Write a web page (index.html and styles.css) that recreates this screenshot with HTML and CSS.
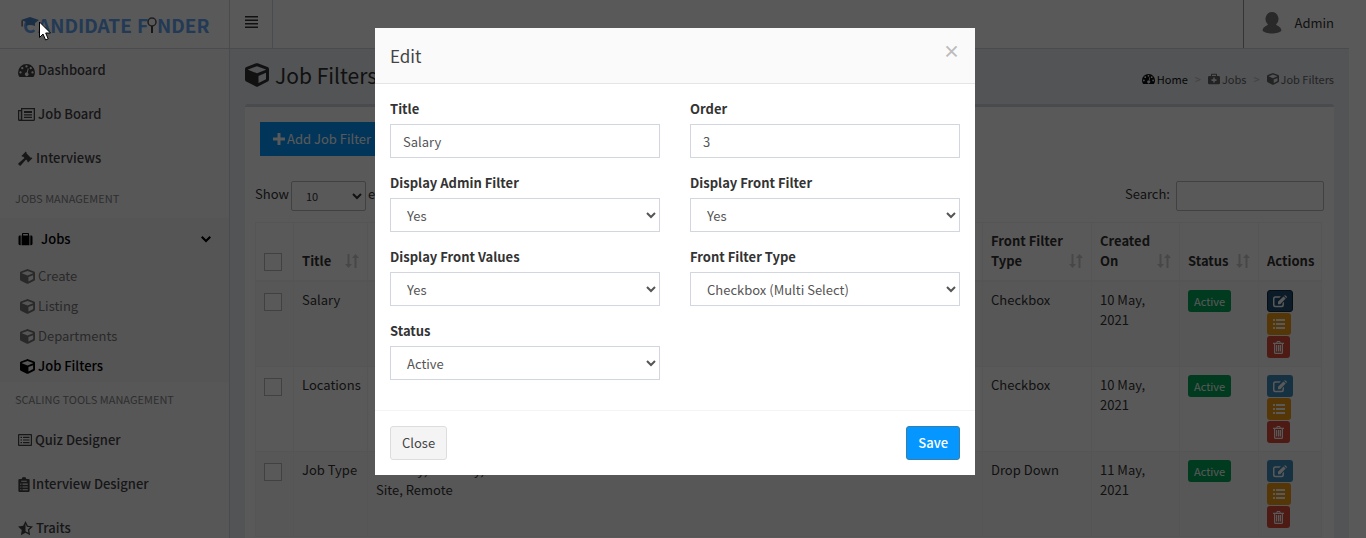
FILE: index.html
```html
<!DOCTYPE html>
<html lang="en">
<head>
<meta charset="utf-8">
<meta name="viewport" content="width=device-width, initial-scale=1">
<title>Job Filters</title>
<link rel="stylesheet" href="styles.css">
</head>
<body>
<svg class="sprite" aria-hidden="true">
  <symbol id="cube" viewBox="0 0 512 512"><path d="M239.1 6.3l-208 78c-18.7 7-31.1 25-31.1 45v225.1c0 18.2 10.3 34.8 26.5 42.9l208 104c13.5 6.8 29.4 6.8 42.9 0l208-104c16.3-8.1 26.5-24.8 26.5-42.9V129.3c0-20-12.4-37.9-31.1-44.9l-208-78C262 2.2 250 2.2 239.1 6.3zM256 68.4l192 72v1.1l-192 78-192-78v-1.1l192-72zm32 356V275.5l160-65v133.9l-160 80z"/></symbol>
  <symbol id="dash" viewBox="0 0 18 16"><path fill-rule="evenodd" d="M9 1a9 9 0 0 0-9 9c0 1.800.5 3.400 1.400 4.700.2.200.3.300.6.300h14c.3 0 .4-.1.6-.3A9 9 0 0 0 9 1zM2.600 8.800a1.200 1.200 0 1 1 0 2.400 1.200 1.200 0 0 1 0-2.400zM4.500 4.300a1.200 1.200 0 1 1 0 2.400 1.200 1.200 0 0 1 0-2.400zM9 2.400a1.200 1.200 0 1 1 0 2.400 1.200 1.200 0 0 1 0-2.400zM13.500 4.300a1.200 1.200 0 1 1 0 2.400 1.200 1.200 0 0 1 0-2.400zM15.400 8.800a1.200 1.200 0 1 1 0 2.400 1.200 1.200 0 0 1 0-2.400zM10.300 5.700l1 .3-1 4.300a2 2 0 1 1-1-.3z"/></symbol>
  <symbol id="news" viewBox="0 0 17 13"><path fill-rule="evenodd" d="M3 0h14v11.500a1.500 1.500 0 0 1-1.500 1.500h-14A1.500 1.500 0 0 1 0 11.500V2h3zm1.300 1.300v10.400h11.400V1.300zM1.200 3.200v8.300h1.600V3.200zM6 3h8v2H6zm0 3.200h8v1.300H6zm0 2.500h8V10H6z"/></symbol>
  <symbol id="gavel" viewBox="0 0 16 16"><path d="M8.300.6 3.700 5.200l.8.9.9-.2 1.500 1.500L.8 12.900c-.7.600-.7 1.200-.1 1.800l.6.6c.6.600 1.200.600 1.800-.1l5.500-6.100 1.500 1.500-.2.9.9.8 4.600-4.600-.9-.8-.9.200-4.600-4.600.2-.9z"/></symbol>
  <symbol id="case" viewBox="0 0 16 16"><path fill-rule="evenodd" d="M5 1h6a1 1 0 0 1 1 1v2h.5v11h-9V4H4V2a1 1 0 0 1 1-1zm.3 1.300V4h5.400V2.300zM2.500 4v11H1.600A1.600 1.600 0 0 1 0 13.400V5.600A1.600 1.600 0 0 1 1.600 4zM13.500 4h.9A1.600 1.600 0 0 1 16 5.600v7.800a1.600 1.600 0 0 1-1.600 1.600h-.9z"/></symbol>
  <symbol id="medkit" viewBox="0 0 16 16"><path fill-rule="evenodd" d="M5 1h6a1 1 0 0 1 1 1v2h2.400A1.600 1.600 0 0 1 16 5.600v7.800a1.600 1.600 0 0 1-1.600 1.600H1.600A1.600 1.600 0 0 1 0 13.400V5.600A1.600 1.600 0 0 1 1.600 4H4V2a1 1 0 0 1 1-1zm.3 1.300V4h5.400V2.300zM7 6v2.300H4.700v2.200H7v2.300h2v-2.300h2.300V8.300H9V6z"/></symbol>
  <symbol id="listalt" viewBox="0 0 14 12"><path fill-rule="evenodd" d="M1 0h12a1 1 0 0 1 1 1v10a1 1 0 0 1-1 1H1a1 1 0 0 1-1-1V1a1 1 0 0 1 1-1zm.2 1.200v9.600h11.600V1.200zM2.500 2.800H4V4H2.500zm2.500 0h6.500V4H5zM2.500 5.400H4v1.200H2.500zm2.500 0h6.500v1.200H5zM2.500 8H4v1.200H2.500zM5 8h6.500v1.200H5z"/></symbol>
  <symbol id="clip" viewBox="0 0 12 16"><path fill-rule="evenodd" d="M1.300 2H3.500a2.500 2 0 0 1 5 0h2.200A1.300 1.300 0 0 1 12 3.300v11.400a1.300 1.300 0 0 1-1.300 1.300H1.300A1.300 1.300 0 0 1 0 14.700V3.300A1.300 1.300 0 0 1 1.300 2zM3 4v1h6V4zM2 7v1.200h1.200V7zm2.400 0v1.200H10V7zM2 10v1.200h1.200V10zm2.400 0v1.200H10V10zM2 13v1.200h1.200V13zm2.400 0v1.200H10V13z"/></symbol>
  <symbol id="star" viewBox="0 0 16 16"><path fill-rule="evenodd" d="M8 0l2.500 5 5.500.8-4 3.800.9 5.500L8 12.500l-4.900 2.600L4 9.600 0 5.800 5.500 5zM8 3v8l3.100 1.600-.6-3.500 2.500-2.400-3.500-.5z"/></symbol>
  <symbol id="edit" viewBox="0 0 16 14"><path fill-rule="evenodd" d="M2.500 1H9L7.400 2.700H2.900a1.200 1.200 0 0 0-1.200 1.200v6.700a1.200 1.200 0 0 0 1.200 1.200h6.700a1.200 1.200 0 0 0 1.200-1.200V9l1.700-1.700V11a2.500 2.500 0 0 1-2.500 2.500H2.500A2.500 2.500 0 0 1 0 11V3.500A2.500 2.500 0 0 1 2.500 1zM12 1.200l2.500 2.500L8.300 10H5.700V7.400zM12.700.5l.4-.4a1 1 0 0 1 1.300 0l1.200 1.200a1 1 0 0 1 0 1.300l-.5.5z"/></symbol>
  <symbol id="list" viewBox="0 0 12 10"><path d="M0 0h2v2H0zm3 0h9v2H3zM0 4h2v2H0zm3 0h9v2H3zM0 8h2v2H0zm3 0h9v2H3z"/></symbol>
  <symbol id="trash" viewBox="0 0 11 13"><path fill-rule="evenodd" d="M4 0h3l.8 1.700H11V3h-1v8.400A1.600 1.600 0 0 1 8.400 13H2.600A1.600 1.600 0 0 1 1 11.400V3H0V1.700h3.200zM2.200 3v8.700h6.600V3zM4.600 1l-.3.7h2.400L6.400 1zM3 4h1.200v6.500H3zm2 0h1.200v6.500H5zm1.800 0H8v6.500H6.800z"/></symbol>
  <symbol id="sort" viewBox="0 0 14 14"><path d="M2.500 0h2v10H7l-3.500 4L0 10h2.500zM9.500 14h2V4H14l-3.500-4L7 4h2.500z"/></symbol>
  <symbol id="plus" viewBox="0 0 12 12"><path d="M4.500 0h3v4.500H12v3H7.500V12h-3V7.500H0v-3h4.500z"/></symbol>
</svg>

<div class="app">
  <header class="top">
    <a class="brand" href="#" aria-label="Candidate Finder">
      <svg width="190" height="48" viewBox="0 -14 190 48">
        <g class="brand-text">
          <text x="3" y="19">C</text><text x="18" y="19">ANDIDATE</text><text x="117" y="19">F</text><text x="137" y="19">NDER</text>
        </g>
        <path class="cap" d="M1 6 10 3l9 3-4 3v3q-5-2-9 0V8z"/>
        <path class="dark" d="M1.500 6.500h1.200v6H1.500z"/>
        <circle class="lens" cx="132" cy="8" r="4"/>
        <path class="dark" d="M131 12h2v7h-2z"/>
      </svg>
    </a>
    <button class="toggle" aria-label="Toggle navigation"><svg width="13" height="12" viewBox="0 0 13 12"><path d="M0 0h13v1.500H0zm0 3.500h13V5H0zM0 7h13v1.500H0zm0 3.500h13V12H0z"/></svg></button>
    <a class="user" href="#"><svg width="20" height="22" viewBox="0 0 20 22"><path d="M10 0a6.500 7 0 0 1 4 12.500c1 1.500 5 2 5.500 6C17 22.500 3 22.500.500 18.500 1 14.500 5 14 6 12.500A6.500 7 0 0 1 10 0z"/></svg>Admin</a>
  </header>

  <div class="main">
    <nav class="side">
      <a class="item" href="#"><svg width="17" height="15"><use href="#dash"/></svg>Dashboard</a>
      <a class="item" href="#"><svg width="17" height="13"><use href="#news"/></svg>Job Board</a>
      <a class="item" href="#"><svg width="15" height="15"><use href="#gavel"/></svg>Interviews</a>
      <div class="group">JOBS MANAGEMENT</div>
      <div class="open">
        <a class="item on spaced" href="#"><svg width="15" height="14"><use href="#case"/></svg>Jobs<svg class="chev" width="10" height="7" viewBox="0 0 10 7"><path d="M1.500 0 5 3.500 8.500 0 10 1.500 5 6.500 0 1.500z"/></svg></a>
        <a class="sub" href="#"><svg width="15" height="15"><use href="#cube"/></svg>Create</a>
        <a class="sub" href="#"><svg width="15" height="15"><use href="#cube"/></svg>Listing</a>
        <a class="sub" href="#"><svg width="15" height="15"><use href="#cube"/></svg>Departments</a>
        <a class="sub on" href="#"><svg width="15" height="15"><use href="#cube"/></svg>Job Filters</a>
      </div>
      <div class="group">SCALING TOOLS MANAGEMENT</div>
      <a class="item" href="#"><svg width="14" height="12"><use href="#listalt"/></svg>Quiz Designer</a>
      <a class="item tight" href="#"><svg width="12" height="15"><use href="#clip"/></svg>Interview Designer</a>
      <a class="item" href="#"><svg width="15" height="15"><use href="#star"/></svg>Traits</a>
    </nav>

    <main class="content">
      <div class="heading">
        <h1><svg width="24" height="24"><use href="#cube"/></svg>Job Filters</h1>
        <nav class="crumbs">
          <a class="home" href="#"><svg width="13" height="12"><use href="#dash"/></svg>Home</a><span class="sep">&gt;</span>
          <a href="#"><svg width="12" height="12"><use href="#medkit"/></svg>Jobs</a><span class="sep">&gt;</span>
          <a href="#"><svg width="12" height="12"><use href="#cube"/></svg>Job Filters</a>
        </nav>
      </div>
      <section class="box">
        <button class="add"><svg width="12" height="12"><use href="#plus"/></svg>Add Job Filter</button>
        <div class="tools">
          <label><span>Show</span><select class="len"><option>10</option></select><span>entries</span></label>
          <label class="find"><span>Search:</span><input class="search" type="search"></label>
        </div>
        <table>
          <colgroup><col class="c-check"><col class="c-title"><col><col class="c-type"><col class="c-date"><col class="c-status"><col class="c-act"></colgroup>
          <thead><tr>
            <th><input type="checkbox" aria-label="Select all"></th>
            <th><div class="th">Title<svg width="14" height="14"><use href="#sort"/></svg></div></th>
            <th></th>
            <th><div class="th">Front Filter Type<svg width="14" height="14"><use href="#sort"/></svg></div></th>
            <th><div class="th">Created On<svg width="14" height="14"><use href="#sort"/></svg></div></th>
            <th><div class="th">Status<svg width="14" height="14"><use href="#sort"/></svg></div></th>
            <th>Actions</th>
          </tr></thead>
          <tbody>
            <tr>
              <td><input type="checkbox" aria-label="Select Salary"></td><td>Salary</td><td></td><td>Checkbox</td><td>10 May, 2021</td><td><span class="tag">Active</span></td>
              <td><div class="acts"><button class="b-edit pressed" aria-label="Edit"><svg width="14" height="13"><use href="#edit"/></svg></button><button class="b-list" aria-label="Values"><svg width="12" height="10"><use href="#list"/></svg></button><button class="b-del" aria-label="Delete"><svg width="11" height="13"><use href="#trash"/></svg></button></div></td>
            </tr>
            <tr>
              <td><input type="checkbox" aria-label="Select Locations"></td><td>Locations</td><td></td><td>Checkbox</td><td>10 May, 2021</td><td><span class="tag">Active</span></td>
              <td><div class="acts"><button class="b-edit" aria-label="Edit"><svg width="14" height="13"><use href="#edit"/></svg></button><button class="b-list" aria-label="Values"><svg width="12" height="10"><use href="#list"/></svg></button><button class="b-del" aria-label="Delete"><svg width="11" height="13"><use href="#trash"/></svg></button></div></td>
            </tr>
            <tr>
              <td><input type="checkbox" aria-label="Select Job Type"></td><td>Job Type</td><td>Full Day, Half Day, On<br>Site, Remote</td><td>Drop Down</td><td>11 May, 2021</td><td><span class="tag">Active</span></td>
              <td><div class="acts"><button class="b-edit" aria-label="Edit"><svg width="14" height="13"><use href="#edit"/></svg></button><button class="b-list" aria-label="Values"><svg width="12" height="10"><use href="#list"/></svg></button><button class="b-del" aria-label="Delete"><svg width="11" height="13"><use href="#trash"/></svg></button></div></td>
            </tr>
          </tbody>
        </table>
      </section>
    </main>
  </div>
</div>

<div class="backdrop">
  <form class="modal" role="dialog" aria-labelledby="edit-title">
    <div class="modal-head"><h2 id="edit-title">Edit</h2><button type="button" class="x" aria-label="Close dialog">×</button></div>
    <div class="fields">
      <div class="field"><label for="f-title">Title</label><input id="f-title" type="text" value="Salary"></div>
      <div class="field"><label for="f-order">Order</label><input id="f-order" type="text" value="3"></div>
      <div class="field"><label for="f-admin">Display Admin Filter</label><select id="f-admin"><option>Yes</option><option>No</option></select></div>
      <div class="field"><label for="f-front">Display Front Filter</label><select id="f-front"><option>Yes</option><option>No</option></select></div>
      <div class="field"><label for="f-values">Display Front Values</label><select id="f-values"><option>Yes</option><option>No</option></select></div>
      <div class="field"><label for="f-type">Front Filter Type</label><select id="f-type"><option>Checkbox (Multi Select)</option></select></div>
      <div class="field"><label for="f-status">Status</label><select id="f-status"><option>Active</option></select></div>
    </div>
    <div class="modal-foot"><button type="button" class="close">Close</button><button type="submit" class="save">Save</button></div>
  </form>
</div>
<svg class="cursor" width="12" height="20" viewBox="0 0 12 20" aria-hidden="true"><path d="M.5 1v15.500L4 13l2.600 6 2.600-1.100L6.700 12h4.800z"/></svg>
</body>
</html>
```
FILE: styles.css
```css
* { box-sizing: border-box; }
body, button, input, select {
  font-family: "Noto Sans CJK SC", "Noto Sans", sans-serif;
  font-size: 13px;
  line-height: 20px;
  color: #333;
}
body { margin: 0; height: 100vh; overflow: hidden; background: #fff; }
a { color: inherit; text-decoration: none; }
svg { fill: currentColor; flex: none; }
button { display: inline-flex; align-items: center; justify-content: center; padding: 0; border: 0; cursor: pointer; }
.sprite { position: absolute; width: 0; height: 0; }

.app { height: 100vh; padding-right: 17px; display: flex; flex-direction: column; overflow: hidden; }
.top { display: flex; flex: none; height: 49px; border-bottom: 1px solid #d2d6de; }
.brand { width: 230px; padding: 0 20px; border-right: 1px solid #d2d6de; flex: none; }
.brand svg { display: block; }
.brand-text { font-weight: 700; font-size: 19px; fill: #62a5f2; }
.cap { fill: #4b86c8; }
.dark { fill: #444; }
.lens { fill: none; stroke: #555; stroke-width: 1.5; }
.toggle { width: 43px; padding-bottom: 5px; background: none; border-right: 1px solid #d2d6de; }
.user { display: flex; align-items: center; gap: 12px; margin-left: auto; padding: 0 15px 2px 18px; border-left: 1px solid #999; }
.user svg { color: #777; }

.main { display: flex; flex: 1; min-height: 0; }
.side { width: 230px; flex: none; overflow: hidden; background: #f9fafc; border-right: 1px solid #d2d6de; font-weight: 500; }
.item { display: flex; align-items: center; gap: 3px; height: 44px; padding: 0 18px 2px; color: #444; }
.item.spaced { gap: 8px; }
.item.tight { gap: 2px; }
.chev { margin-left: auto; }
.group { height: 37px; padding: 7px 15px 10px; font-size: 11px; font-weight: 400; color: #848484; }
.open { background: #f4f4f5; }
.sub { display: flex; align-items: center; gap: 3px; height: 30px; padding: 0 0 2px 20px; font-weight: 400; color: #777; }
.item.on, .sub.on { color: #000; font-weight: 500; }

.content { flex: 1; min-width: 0; padding: 0 15px; background: #ecf0f5; }
.heading { display: flex; align-items: center; justify-content: space-between; height: 55px; padding-bottom: 4px; }
h1 { display: flex; align-items: center; gap: 6px; margin: 0; font-size: 21px; line-height: 26px; font-weight: 400; }
.crumbs { display: flex; align-items: center; font-size: 11px; color: #666; padding-top: 8px; }
.crumbs a { display: flex; align-items: center; gap: 2px; }
.crumbs .home { color: #111; }
.sep { padding: 0 7px; color: #bbb; }
.box { padding: 15px 10px; background: #fff; border-top: 3px solid #d2d6de; border-radius: 3px; }
.add { gap: 2px; height: 34px; margin-left: 5px; padding: 0 13px; color: #fff; background: #0597ff; }
.tools { display: flex; justify-content: space-between; margin-top: 24px; }
.tools label { display: flex; align-items: flex-start; gap: 2px; height: 31px; }
.tools .find { gap: 6px; }
.tools span { padding-top: 4px; }
.len, .search { height: 30px; margin: 1px 0 0; border: 1px solid #bbb; border-radius: 2px; background: #fff; }
.len { width: 75px; padding: 0 10px; font-size: 11px; }
.search { width: 148px; }

table { width: calc(100% - 2px); margin-top: 11px; table-layout: fixed; border-collapse: collapse; }
.c-check { width: 38px; } .c-title { width: 74px; } .c-type { width: 109px; }
.c-date { width: 88px; } .c-status { width: 79px; } .c-act { width: 63px; }
th, td { padding: 8px; border: 1px solid #f4f4f4; text-align: left; vertical-align: top; }
th { padding-bottom: 9px; vertical-align: bottom; border-bottom-width: 2px; font-weight: 700; }
td { height: 85px; }
tbody tr:nth-child(odd) { background: #f9f9f9; }
.th { display: flex; align-items: flex-end; justify-content: space-between; }
.th svg { color: #ccc; margin-bottom: 3px; }
table input { appearance: none; display: block; width: 18px; height: 18px; margin: 3px 0 0; border: 1px solid #bbb; background: #fff; }
.tag { display: inline-flex; align-items: center; height: 22px; padding: 0 6px; border-radius: 3px; color: #fff; background: #00a65a; font-size: 11px; }
.acts { display: flex; flex-direction: column; align-items: flex-start; gap: 1px; }
.acts button { height: 22px; padding: 0 6px; color: #fff; border-radius: 3px; }
.b-edit { background: #3c8dbc; }
.acts .pressed { padding: 0 5px; background: #204d74; border: 1px solid #122b40; }
.b-list { background: #f39c12; }
.b-del { background: #dd4b39; }

.backdrop { position: fixed; inset: 0; padding: 28px 33px 28px 17px; background: rgba(0, 0, 0, .65); }
.modal { max-width: 600px; margin: 0 auto; background: #fff; }
.modal-head { display: flex; justify-content: space-between; align-items: flex-start; padding: 15px; background: #fafafa; border-bottom: 1px solid #e5e5e5; }
h2 { margin: 0; font-size: 17px; line-height: 25px; font-weight: 400; color: #444; }
.x { background: none; color: #bbb; font-weight: 700; font-size: 17px; line-height: 16px; }
.fields { display: grid; grid-template-columns: 1fr 1fr; gap: 15px 30px; padding: 15px 15px 30px; }
.field { display: grid; gap: 5px; }
.field label { font-weight: 700; }
.field input, .field select { width: 100%; height: 34px; margin: 0; padding: 6px 12px; border: 1px solid #d2d6de; border-radius: 0; background: #fff; color: #555; }
.modal-foot { display: flex; justify-content: space-between; padding: 15px; border-top: 1px solid #f4f4f4; }
.modal-foot button { height: 34px; padding: 0 12px; border-radius: 3px; }
.modal-foot .close { padding: 0 11px; background: #f4f4f4; border: 1px solid #ddd; color: #444; }
.modal-foot .save { padding: 0 11px; background: #0597ff; border: 1px solid #367fa9; color: #fff; font-weight: 500; }
.cursor { position: fixed; left: 39px; top: 21px; fill: #fff; stroke: #000; }
```
